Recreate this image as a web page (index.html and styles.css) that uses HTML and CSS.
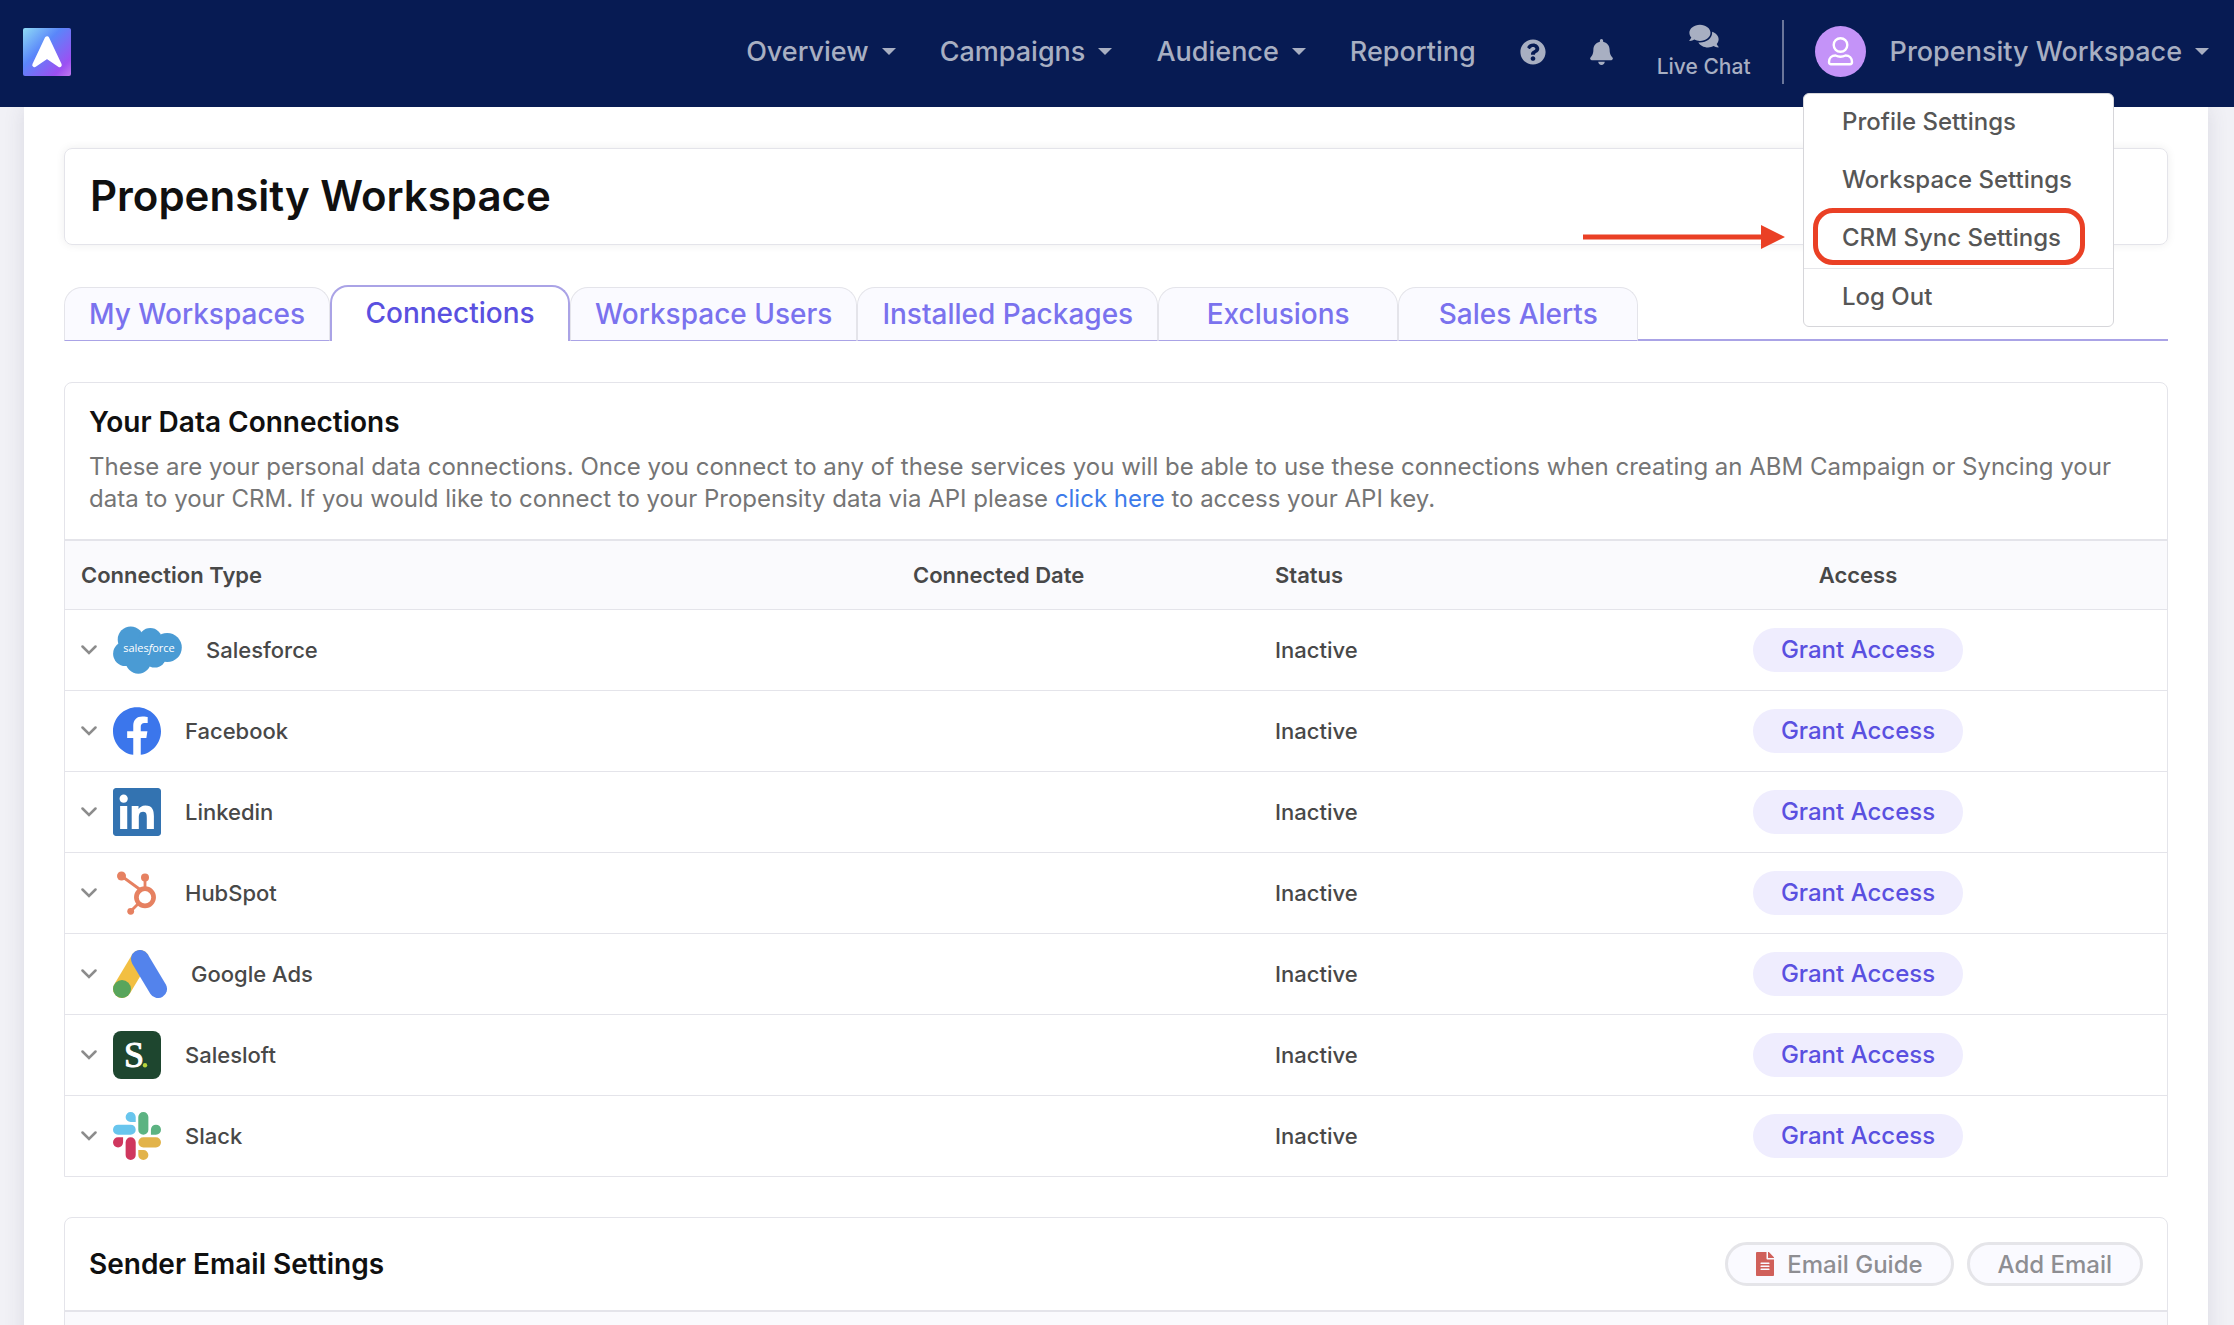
FILE: index.html
```
<!DOCTYPE html>
<html lang="en">
<head>
  <meta charset="UTF-8">
  <meta name="viewport" content="width=device-width, initial-scale=1.0">
  <title>Propensity Workspace - Connections</title>
  <link rel="stylesheet" href="styles.css">
</head>
<body>
  <header class="topbar">
    <a href="#" class="logo" aria-label="Home">
      <svg width="48" height="48" viewBox="0 0 48 48">
        <defs>
          <linearGradient id="logoFill" x1="0" y1="0" x2="1" y2="1">
            <stop offset="0" stop-color="#8fdcf5"/>
            <stop offset="0.4" stop-color="#5a86fa"/>
            <stop offset="0.82" stop-color="#9c50f2"/>
            <stop offset="1" stop-color="#c078f0"/>
          </linearGradient>
        </defs>
        <rect width="48" height="48" rx="2" fill="url(#logoFill)"/>
        <path d="M24 10.5L11.5 37L24 28.5L36.500 37Z" fill="#fff" stroke="#fff" stroke-width="4.500" stroke-linejoin="round"/>
      </svg>
    </a>

    <nav class="main-nav">
      <a href="#" class="nav-link has-caret">Overview</a>
      <a href="#" class="nav-link has-caret">Campaigns</a>
      <a href="#" class="nav-link has-caret">Audience</a>
      <a href="#" class="nav-link">Reporting</a>
      <a href="#" class="nav-icon" aria-label="Help">
        <svg width="26" height="26" viewBox="0 0 512 512"><path d="M504 256c0 136.997-111.043 248-248 248S8 392.997 8 256C8 119.083 119.043 8 256 8s248 111.083 248 248zM262.655 90c-54.497 0-89.255 22.957-116.549 63.758-3.536 5.286-2.353 12.415 2.715 16.258l34.699 26.31c5.205 3.947 12.621 3.008 16.665-2.122 17.864-22.658 30.113-35.797 57.303-35.797 20.429 0 45.698 13.148 45.698 32.958 0 14.976-12.363 22.667-32.534 33.976C247.128 238.528 216 254.941 216 296v4c0 6.627 5.373 12 12 12h56c6.627 0 12-5.373 12-12v-1.333c0-28.462 83.186-29.647 83.186-106.667 0-58.002-60.165-102-116.531-102zM256 338c-25.365 0-46 20.635-46 46 0 25.364 20.635 46 46 46s46-20.636 46-46c0-25.365-20.635-46-46-46z"/></svg>
      </a>
      <a href="#" class="nav-icon" aria-label="Notifications">
        <svg width="23" height="26" viewBox="0 0 448 512"><path d="M224 512c35.32 0 63.97-28.65 63.97-64H160.03c0 35.35 28.65 64 63.97 64zm215.39-149.71c-19.32-20.76-55.47-51.99-55.47-154.29 0-77.7-54.48-139.9-127.94-155.16V32c0-17.67-14.32-32-31.98-32s-31.98 14.33-31.98 32v20.84C118.56 68.1 64.08 130.3 64.08 208c0 102.3-36.15 133.53-55.47 154.29-6 6.45-8.66 14.16-8.61 21.71.11 16.4 12.98 32 32.1 32h383.8c19.12 0 32-15.6 32.1-32 .05-7.55-2.61-15.27-8.61-21.71z"/></svg>
      </a>
      <a href="#" class="live-chat">
        <svg width="30" height="26" viewBox="0 0 576 512"><path d="M416 192c0-88.4-93.1-160-208-160S0 103.6 0 192c0 34.3 14.1 65.9 38 92-13.4 30.2-35.5 54.2-35.8 54.5-2.2 2.3-2.8 5.7-1.5 8.7S4.8 352 8 352c36.6 0 66.9-12.3 88.7-25 32.2 15.7 70.3 25 111.3 25 114.9 0 208-71.6 208-160zm122 220c23.900-26 38-57.700 38-92 0-66.900-53.500-124.200-129.300-148.100.9 6.600 1.300 13.300 1.300 20.100 0 105.900-107.700 192-240 192-10.800 0-21.300-.8-31.700-1.900C207.800 439.600 281.800 480 368 480c41 0 79.100-9.200 111.300-25 21.800 12.700 52.100 25 88.700 25 3.200 0 6.100-1.900 7.300-4.800 1.300-2.900.7-6.300-1.500-8.700-.3-.3-22.400-24.200-35.800-54.500z"/></svg>
        Live Chat
      </a>
    </nav>

    <div class="account">
      <button class="account-toggle" aria-expanded="true">
        <svg class="avatar" width="51" height="51" viewBox="0 0 51 51">
          <circle cx="25.500" cy="25.500" r="25.500" fill="#c493f8"/>
          <g fill="none" stroke="#fff" stroke-width="2.400" stroke-linejoin="round">
            <circle cx="25.500" cy="19" r="6.800"/>
            <path d="M20.500 29.500c2 1 3.200 1.200 5 1.200s3-.2 5-1.200c4 0 6.500 3 6.500 6.500 0 1.500-.8 2.200-2 2.200h-19c-1.200 0-2-.7-2-2.200 0-3.500 2.500-6.500 6.500-6.500z"/>
          </g>
        </svg>
        <span class="has-caret">Propensity Workspace</span>
      </button>

      <div class="account-menu">
        <a href="#">Profile Settings</a>
        <a href="#">Workspace Settings</a>
        <a href="#" class="highlighted">CRM Sync Settings
          <svg class="arrow" width="202" height="24" viewBox="0 0 202 24"><path d="M0 9.500h178V0l24 12-24 12v-9.500H0z"/></svg>
        </a>
        <a href="#" class="log-out">Log Out</a>
      </div>
    </div>
  </header>

  <main class="page">
    <div class="title-box">
      <h1>Propensity Workspace</h1>
    </div>

    <nav class="tabs">
      <a href="#" class="tab">My Workspaces</a>
      <a href="#" class="tab active">Connections</a>
      <a href="#" class="tab">Workspace Users</a>
      <a href="#" class="tab">Installed Packages</a>
      <a href="#" class="tab">Exclusions</a>
      <a href="#" class="tab">Sales Alerts</a>
    </nav>

    <section class="panel">
      <div class="panel-head">
        <h2>Your Data Connections</h2>
        <p>These are your personal data connections. Once you connect to any of these services you will be able to use these connections when creating an ABM Campaign or Syncing your data to your CRM. If you would like to connect to your Propensity data via API please <a href="#">click here</a> to access your API key.</p>
      </div>

      <table class="connections">
        <thead>
          <tr>
            <th class="col-type">Connection Type</th>
            <th class="col-date">Connected Date</th>
            <th class="col-status">Status</th>
            <th class="col-access">Access</th>
          </tr>
        </thead>
        <tbody>
          <tr>
            <td>
              <div class="service">
                <svg class="chevron" width="16" height="10" viewBox="0 0 16 10"><path d="M1.500 1.500L8 8l6.500-6.500"/></svg>
                <svg width="69" height="48" viewBox="0 0 69 48">
                  <g fill="#4a9bd4">
                    <circle cx="17.700" cy="13.400" r="13"/>
                    <circle cx="37.300" cy="13.800" r="11.700"/>
                    <circle cx="54.200" cy="21.500" r="14.600"/>
                    <circle cx="12.400" cy="27.700" r="12.300"/>
                    <circle cx="25.300" cy="35.200" r="12.600"/>
                    <circle cx="41.700" cy="30" r="11.500"/>
                    <rect x="14" y="12" width="34" height="24"/>
                  </g>
                  <text x="36" y="26" class="cloud-text">sales<tspan font-style="italic">f</tspan>orce</text>
                </svg>
                Salesforce
              </div>
            </td>
            <td></td>
            <td>Inactive</td>
            <td class="access"><button class="btn-grant">Grant Access</button></td>
          </tr>
          <tr>
            <td>
              <div class="service">
                <svg class="chevron" width="16" height="10" viewBox="0 0 16 10"><path d="M1.500 1.500L8 8l6.500-6.500"/></svg>
                <svg width="48" height="48" viewBox="0 0 24 24"><path fill="#3b76ec" d="M24 12.073c0-6.627-5.373-12-12-12s-12 5.373-12 12c0 5.990 4.388 10.954 10.125 11.854v-8.385H7.078v-3.470h3.047V9.430c0-3.007 1.792-4.669 4.533-4.669 1.312 0 2.686.235 2.686.235v2.953H15.830c-1.491 0-1.956.925-1.956 1.874v2.250h3.328l-.532 3.470h-2.796v8.385C19.612 23.027 24 18.062 24 12.073z"/></svg>
                Facebook
              </div>
            </td>
            <td></td>
            <td>Inactive</td>
            <td class="access"><button class="btn-grant">Grant Access</button></td>
          </tr>
          <tr>
            <td>
              <div class="service">
                <svg class="chevron" width="16" height="10" viewBox="0 0 16 10"><path d="M1.500 1.500L8 8l6.500-6.500"/></svg>
                <svg width="48" height="48" viewBox="0 0 24 24"><path fill="#3373b1" d="M20.447 20.452h-3.554v-5.569c0-1.328-.027-3.037-1.852-3.037-1.853 0-2.136 1.445-2.136 2.939v5.667H9.351V9h3.414v1.561h.046c.477-.9 1.637-1.850 3.370-1.850 3.601 0 4.267 2.370 4.267 5.455v6.286zM5.337 7.433c-1.144 0-2.063-.926-2.063-2.065 0-1.138.92-2.063 2.063-2.063 1.140 0 2.064.925 2.064 2.063 0 1.139-.925 2.065-2.064 2.065zm1.782 13.019H3.555V9h3.564v11.452zM22.500 0H1.500C.7 0 0 .7 0 1.500v21c0 .8.7 1.500 1.500 1.500h21c.8 0 1.500-.7 1.500-1.500v-21c0-.8-.7-1.500-1.500-1.500z"/></svg>
                Linkedin
              </div>
            </td>
            <td></td>
            <td>Inactive</td>
            <td class="access"><button class="btn-grant">Grant Access</button></td>
          </tr>
          <tr>
            <td>
              <div class="service">
                <svg class="chevron" width="16" height="10" viewBox="0 0 16 10"><path d="M1.500 1.500L8 8l6.500-6.500"/></svg>
                <svg width="48" height="48" viewBox="0 0 48 48">
                  <g fill="#e68161">
                    <circle cx="8.500" cy="7" r="4.500"/>
                    <circle cx="32" cy="8.600" r="4"/>
                    <circle cx="17.700" cy="42.300" r="3.400"/>
                  </g>
                  <g fill="none" stroke="#e68161">
                    <circle cx="32" cy="28.300" r="8.600" stroke-width="4.700"/>
                    <path d="M8.500 7L27 20.500M32 9v10M17.700 42.300l8-8" stroke-width="2.800"/>
                  </g>
                </svg>
                HubSpot
              </div>
            </td>
            <td></td>
            <td>Inactive</td>
            <td class="access"><button class="btn-grant">Grant Access</button></td>
          </tr>
          <tr>
            <td>
              <div class="service">
                <svg class="chevron" width="16" height="10" viewBox="0 0 16 10"><path d="M1.500 1.500L8 8l6.500-6.500"/></svg>
                <svg width="54" height="48" viewBox="0 0 54 48">
                  <g stroke-width="18" stroke-linecap="round">
                    <path d="M27 9L9 39" stroke="#f2bf42"/>
                    <path d="M27 9l18 30" stroke="#5383ec"/>
                  </g>
                  <circle cx="9" cy="39" r="9" fill="#58a55c"/>
                </svg>
                Google Ads
              </div>
            </td>
            <td></td>
            <td>Inactive</td>
            <td class="access"><button class="btn-grant">Grant Access</button></td>
          </tr>
          <tr>
            <td>
              <div class="service">
                <svg class="chevron" width="16" height="10" viewBox="0 0 16 10"><path d="M1.500 1.500L8 8l6.500-6.500"/></svg>
                <svg width="48" height="48" viewBox="0 0 48 48">
                  <rect width="48" height="48" rx="8" fill="#1e462f"/>
                  <text x="21" y="36" class="loft-text">S</text>
                  <circle cx="32" cy="34.300" r="2.200" fill="#b9d53c"/>
                </svg>
                Salesloft
              </div>
            </td>
            <td></td>
            <td>Inactive</td>
            <td class="access"><button class="btn-grant">Grant Access</button></td>
          </tr>
          <tr>
            <td>
              <div class="service">
                <svg class="chevron" width="16" height="10" viewBox="0 0 16 10"><path d="M1.500 1.500L8 8l6.500-6.500"/></svg>
                <svg width="48" height="48" viewBox="0 0 24 24">
                  <path fill="#cf375e" d="M5.042 15.165a2.528 2.528 0 0 1-2.520 2.523A2.528 2.528 0 0 1 0 15.165a2.527 2.527 0 0 1 2.522-2.520h2.520v2.520zM6.313 15.165a2.527 2.527 0 0 1 2.521-2.520 2.527 2.527 0 0 1 2.521 2.520v6.313A2.528 2.528 0 0 1 8.834 24a2.528 2.528 0 0 1-2.521-2.522v-6.313z"/>
                  <path fill="#68c5ed" d="M8.834 5.042a2.528 2.528 0 0 1-2.521-2.520A2.528 2.528 0 0 1 8.834 0a2.528 2.528 0 0 1 2.521 2.522v2.520H8.834zM8.834 6.313a2.528 2.528 0 0 1 2.521 2.521 2.528 2.528 0 0 1-2.521 2.521H2.522A2.528 2.528 0 0 1 0 8.834a2.528 2.528 0 0 1 2.522-2.521h6.312z"/>
                  <path fill="#5cb382" d="M18.956 8.834a2.528 2.528 0 0 1 2.522-2.521A2.528 2.528 0 0 1 24 8.834a2.528 2.528 0 0 1-2.522 2.521h-2.522V8.834zM17.688 8.834a2.528 2.528 0 0 1-2.523 2.521 2.527 2.527 0 0 1-2.520-2.521V2.522A2.527 2.527 0 0 1 15.165 0a2.528 2.528 0 0 1 2.523 2.522v6.312z"/>
                  <path fill="#e2b34a" d="M15.165 18.956a2.528 2.528 0 0 1 2.523 2.522A2.528 2.528 0 0 1 15.165 24a2.527 2.527 0 0 1-2.520-2.522v-2.522h2.520zM15.165 17.688a2.527 2.527 0 0 1-2.520-2.523 2.526 2.526 0 0 1 2.520-2.520h6.313A2.527 2.527 0 0 1 24 15.165a2.528 2.528 0 0 1-2.522 2.523h-6.313z"/>
                </svg>
                Slack
              </div>
            </td>
            <td></td>
            <td>Inactive</td>
            <td class="access"><button class="btn-grant">Grant Access</button></td>
          </tr>
        </tbody>
      </table>
    </section>

    <section class="panel">
      <div class="panel-bar">
        <h2>Sender Email Settings</h2>
        <div class="actions">
          <button class="btn-outline">
            <svg width="18" height="24" viewBox="0 0 384 512"><path fill="#d0605a" d="M224 136V0H24C10.700 0 0 10.700 0 24v464c0 13.300 10.700 24 24 24h336c13.300 0 24-10.700 24-24V160H248c-13.200 0-24-10.800-24-24zm64 236c0 6.600-5.400 12-12 12H108c-6.600 0-12-5.400-12-12v-8c0-6.600 5.400-12 12-12h168c6.600 0 12 5.400 12 12v8zm0-64c0 6.600-5.400 12-12 12H108c-6.600 0-12-5.400-12-12v-8c0-6.600 5.400-12 12-12h168c6.600 0 12 5.400 12 12v8zm0-72v8c0 6.600-5.400 12-12 12H108c-6.600 0-12-5.400-12-12v-8c0-6.600 5.400-12 12-12h168c6.600 0 12 5.400 12 12zm96-114.100v6.100H256V0h6.100c6.400 0 12.500 2.500 17 7l97.900 98c4.500 4.500 7 10.600 7 16.900z"/></svg>
            Email Guide
          </button>
          <button class="btn-outline">Add Email</button>
        </div>
      </div>
      <div class="email-list"></div>
    </section>
  </main>
</body>
</html>
```
FILE: styles.css
```
* {
  box-sizing: border-box;
}

body {
  margin: 0;
  font-family: Inter, "Open Sans", sans-serif;
  font-size: 22px;
  font-weight: 500;
  color: #484848;
  background-color: #f1f1f6;
}

a {
  color: inherit;
  text-decoration: none;
}

button {
  font: inherit;
  cursor: pointer;
  border: none;
  background: none;
}

h1, h2, p {
  margin: 0;
}

h1, h2 {
  font-weight: 600;
  color: #101010;
}

svg {
  display: block;
  flex-shrink: 0;
}

/* Top bar */
.topbar {
  position: relative;
  z-index: 2;
  display: flex;
  align-items: center;
  height: 107px;
  padding: 0 25px 4px 23px;
  font-size: 27px;
  color: #a8afc2;
  background-color: #071b53;
}

.main-nav {
  display: flex;
  align-items: center;
  gap: 44px;
  margin-left: auto;
  padding-right: 31px;
}

.topbar svg {
  fill: currentColor;
}

.has-caret {
  display: flex;
  align-items: center;
  gap: 13px;
}

.has-caret::after {
  content: "";
  border: 7px solid transparent;
  border-top-color: currentColor;
  border-bottom: 0;
}

.live-chat {
  display: flex;
  flex-direction: column;
  align-items: center;
  gap: 2px;
  padding-top: 2px;
  font-size: 21px;
  line-height: 32px;
}

.account {
  position: relative;
  padding-left: 31px;
  border-left: 2px solid #6a769a;
}

.account-toggle {
  display: flex;
  align-items: center;
  gap: 24px;
  height: 64px;
  padding: 0;
  color: inherit;
}

.account-menu {
  position: absolute;
  top: 73px;
  right: 95px;
  width: 311px;
  font-size: 24px;
  color: #565656;
  background-color: #fff;
  border: 1px solid #d6d6da;
  border-radius: 6px;
}

.account-menu a {
  display: block;
  height: 58px;
  padding-left: 38px;
  line-height: 56px;
}

.account-menu .log-out {
  border-top: 1px solid #e6e6ea;
}

/* Red callout around the CRM item */
.highlighted {
  position: relative;
}

.highlighted::before {
  content: "";
  position: absolute;
  inset: -2px 28px 3px 9px;
  border: 5px solid #ea4025;
  border-radius: 20px;
}

.topbar .arrow {
  position: absolute;
  top: 15px;
  right: 328px;
  fill: #ea4025;
}

/* Page body */
.page {
  margin: 0 26px 0 24px;
  padding: 41px 40px 0;
  background-color: #fff;
  box-shadow: 0 0 20px rgba(60, 60, 90, 0.12);
}

.title-box {
  padding: 19px 25px 21px;
  border: 1px solid #e4e4ea;
  border-radius: 8px;
  box-shadow: 0 0 10px rgba(0, 0, 0, 0.07);
}

h1 {
  font-size: 42px;
  line-height: 55px;
}

/* Tabs */
.tabs {
  display: flex;
  align-items: flex-end;
  margin: 40px 0 41px;
  box-shadow: inset 0 -2px #aaa3e6;
}

.tab {
  min-width: 240px;
  height: 54px;
  padding: 0 24px;
  font-size: 28px;
  line-height: 52px;
  text-align: center;
  color: #7a72ee;
  background-color: #fafaff;
  border: 1px solid #e4e4ea;
  border-bottom-color: #aaa3e6;
  border-radius: 18px 18px 0 0;
}

.tab.active {
  height: 56px;
  color: #5a50e0;
  background-color: #fff;
  border: 2px solid #aaa3e6;
  border-bottom: 0;
}

/* Panels */
.panel {
  margin-bottom: 40px;
  border: 1px solid #e4e4ea;
  border-radius: 8px 8px 0 0;
}

.panel:last-child {
  margin-bottom: 0;
}

h2 {
  font-size: 28px;
  line-height: 38px;
}

.panel-head {
  padding: 20px 24px 24px;
}

.panel-head p {
  margin-top: 10px;
  font-size: 24px;
  font-weight: 400;
  line-height: 32px;
  color: #757575;
}

.panel-head a {
  color: #3d7bea;
}

.connections {
  width: 100%;
  table-layout: fixed;
  border-collapse: collapse;
}

.connections th {
  height: 69px;
  padding: 0 16px;
  font-weight: 600;
  text-align: left;
  background-color: #fafafd;
  border-top: 2px solid #e4e4ea;
}

.connections td {
  height: 81px;
  padding: 0 16px;
  border-top: 1px solid #e4e4ea;
}

.col-date {
  width: 362px;
}

.col-status {
  width: 290px;
}

.col-access {
  width: 618px;
}

.connections .col-access,
.connections .access {
  text-align: center;
}

.service {
  display: flex;
  align-items: center;
  gap: 24px;
}

.chevron {
  margin-right: -8px;
  fill: none;
  stroke: #8c8c8c;
  stroke-width: 2.500;
  stroke-linecap: round;
}

.cloud-text {
  font-family: "Open Sans", sans-serif;
  font-size: 11px;
  fill: #fff;
  text-anchor: middle;
}

.loft-text {
  font-family: "Liberation Serif", serif;
  font-size: 36px;
  font-weight: normal;
  fill: #fff;
  stroke: #fff;
  text-anchor: middle;
}

.btn-grant {
  height: 44px;
  padding: 0 28px;
  font-size: 24px;
  color: #5a50e0;
  background-color: #efedfe;
  border-radius: 22px;
}

.panel-bar {
  display: flex;
  align-items: center;
  justify-content: space-between;
  padding: 24px;
}

.actions {
  display: flex;
  gap: 13px;
}

.btn-outline {
  display: flex;
  align-items: center;
  gap: 13px;
  height: 44px;
  padding: 0 28px;
  font-size: 24px;
  color: #8e8e92;
  background-color: #fafaff;
  border: 3px solid #e5e5e9;
  border-radius: 22px;
}

.email-list {
  height: 70px;
  background-color: #fafafd;
  border-top: 2px solid #e4e4ea;
}
```
